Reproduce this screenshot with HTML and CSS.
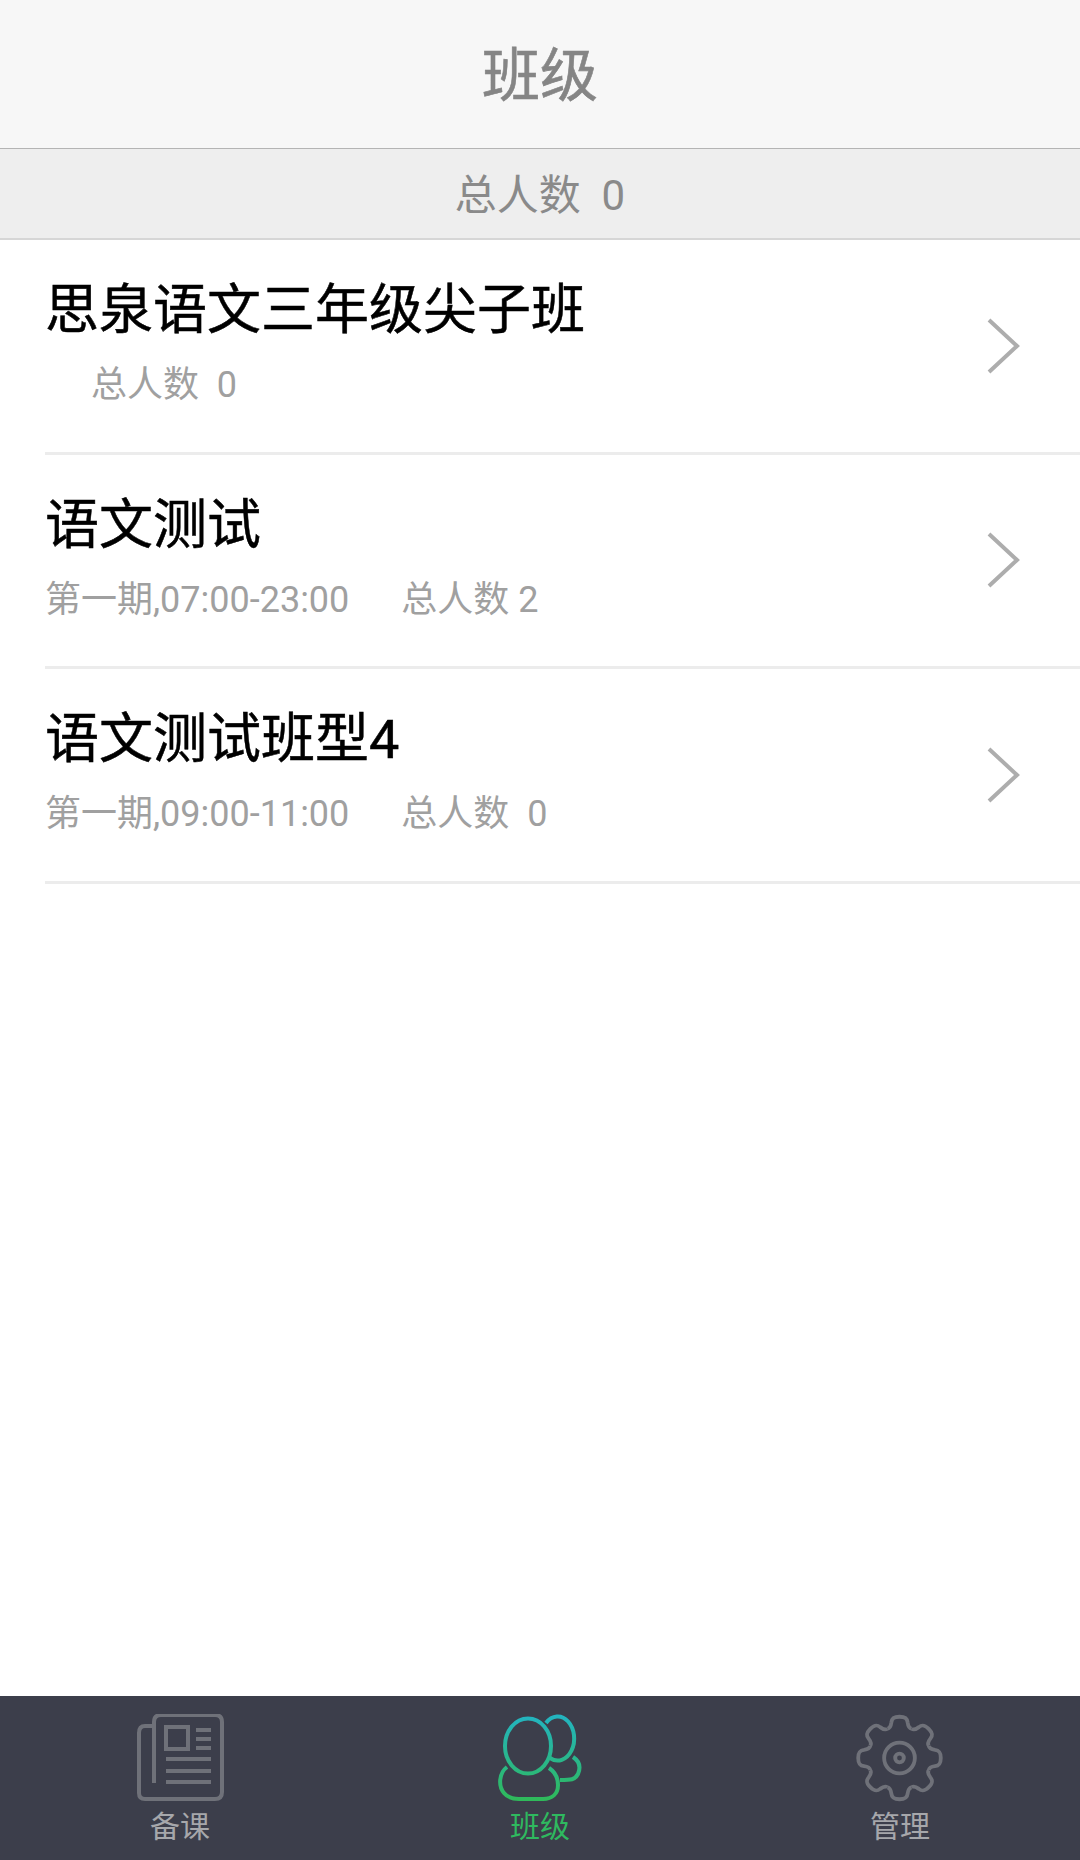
FILE: index.html
```html
<!DOCTYPE html>
<html lang="zh-CN">
<head>
    <meta charset="UTF-8">
    <meta name="viewport" content="width=device-width, initial-scale=1.0">
    <title>班级</title>
    <link rel="stylesheet" href="styles.css">
</head>
<body>
    <div id="app">
        <header class="top-bar">班级</header>
        <div class="total-bar">总人数&nbsp;&nbsp;0</div>

        <ul class="class-list">
            <li class="class-row">
                <div class="class-info">
                    <div class="class-name">思泉语文三年级尖子班</div>
                    <div class="class-meta class-meta-empty"><span>总人数&nbsp;&nbsp;0</span></div>
                </div>
                <svg class="chevron" viewBox="0 0 34 56"><path d="M3 2 L31 28 L3 54"/></svg>
            </li>
            <li class="class-row">
                <div class="class-info">
                    <div class="class-name">语文测试</div>
                    <div class="class-meta"><span class="period">第一期,07:00-23:00</span><span>总人数 2</span></div>
                </div>
                <svg class="chevron" viewBox="0 0 34 56"><path d="M3 2 L31 28 L3 54"/></svg>
            </li>
            <li class="class-row">
                <div class="class-info">
                    <div class="class-name">语文测试班型4</div>
                    <div class="class-meta"><span class="period">第一期,09:00-11:00</span><span>总人数&nbsp;&nbsp;0</span></div>
                </div>
                <svg class="chevron" viewBox="0 0 34 56"><path d="M3 2 L31 28 L3 54"/></svg>
            </li>
        </ul>

        <nav class="tab-bar">
            <div class="tab">
                <svg class="tab-icon" viewBox="0 0 90 90">
                    <g transform="translate(3 1)">
                        <path d="M16 11 H7 Q1 11 1 18 V78 Q1 84 7 84 H77 Q84 84 84 77 V7 Q84 0 77 0 H23 Q16 0 16 7 V68"/>
                        <rect x="28" y="12" width="22" height="22"/>
                        <path d="M58 15 H73 M58 24 H73 M58 33 H73 M28 44 H73 M28 56 H73 M28 67 H73"/>
                    </g>
                </svg>
                <span>备课</span>
            </div>
            <div class="tab tab-active">
                <svg class="tab-icon" viewBox="0 0 90 90">
                    <defs>
                        <linearGradient id="people" gradientUnits="userSpaceOnUse" x1="0" y1="2" x2="0" y2="86">
                            <stop offset="0" stop-color="#23b4c0"/>
                            <stop offset="1" stop-color="#2fb95a"/>
                        </linearGradient>
                    </defs>
                    <g stroke="url(#people)">
                        <ellipse cx="33" cy="32" rx="23" ry="27.5"/>
                        <path d="M51 9 A16.5 22 0 1 1 55 44"/>
                        <path d="M12 53 C4 59 3 72 9 79 C13 84 18 85 24 85 H48 C57 85 63 80 63 71 C63 63 60 58 54 54"/>
                        <path d="M78 43 C84 47 86 53 83 60 C80 66 76 66 65 66"/>
                    </g>
                </svg>
                <span>班级</span>
            </div>
            <div class="tab">
                <svg class="tab-icon" viewBox="0 0 90 90">
                    <defs>
                        <path id="cog" d="M-12.6 -30.5 C-10 -31 -9 -33 -8.5 -37 C-8 -42 -5 -43 0 -43 C5 -43 8 -42 8.5 -37 C9 -33 10 -31 12.6 -30.5"/>
                    </defs>
                    <g transform="translate(44.5 44) scale(.96)">
                        <use href="#cog"/>
                        <use href="#cog" transform="rotate(45)"/>
                        <use href="#cog" transform="rotate(90)"/>
                        <use href="#cog" transform="rotate(135)"/>
                        <use href="#cog" transform="rotate(180)"/>
                        <use href="#cog" transform="rotate(225)"/>
                        <use href="#cog" transform="rotate(270)"/>
                        <use href="#cog" transform="rotate(315)"/>
                        <circle r="16"/>
                        <circle r="4.5"/>
                    </g>
                </svg>
                <span>管理</span>
            </div>
        </nav>
    </div>
</body>
</html>
```

FILE: styles.css
```css
* {
    box-sizing: border-box;
}

body {
    margin: 0;
    background-color: #fff;
    font-family: Roboto, "Noto Sans CJK SC", sans-serif;
}

#app {
    display: flex;
    flex-direction: column;
    width: 1080px;
    height: 1860px;
    overflow: hidden;
}

.top-bar {
    display: flex;
    justify-content: center;
    align-items: center;
    height: 149px;
    padding-top: 3px;
    background-color: #f7f7f7;
    border-bottom: 1px solid #b4b4b4;
    color: #858585;
    font-size: 58px;
    line-height: 1;
    -webkit-text-stroke: 0.6px #858585;
}

.total-bar {
    display: flex;
    justify-content: center;
    align-items: center;
    height: 91px;
    padding-top: 4px;
    background-color: #eeeeee;
    border-bottom: 2px solid #d6d6d6;
    color: #8a8a8a;
    font-size: 42px;
    line-height: 1;
}

.class-list {
    flex: 1;
    margin: 0;
    padding: 0;
    list-style: none;
}

.class-row {
    display: flex;
    justify-content: space-between;
    align-items: center;
    height: 214.5px;
    margin-left: 45px;
    padding-right: 60px;
    border-bottom: 3px solid #ececec;
}

.class-info {
    margin-bottom: 5px;
}

.class-name {
    color: #000;
    font-size: 54px;
    line-height: 70px;
    -webkit-text-stroke: 0.5px #000;
}

.class-meta {
    margin-top: 14px;
    color: #a0a0a0;
    font-size: 36px;
    line-height: 50px;
    white-space: nowrap;
}

.class-meta-empty {
    padding-left: 46px;
}

.period {
    margin-right: 52px;
}

.chevron {
    width: 34px;
    height: 56px;
    fill: none;
    stroke: #adadad;
    stroke-width: 4;
}

.tab-bar {
    display: flex;
    height: 164px;
    background-color: #3c3e4b;
}

.tab {
    flex: 1;
    display: flex;
    flex-direction: column;
    align-items: center;
    padding-top: 18px;
    color: #a6a7ab;
    font-size: 30px;
    line-height: 40px;
}

.tab-active {
    color: #2fb95f;
}

.tab-icon {
    width: 90px;
    height: 90px;
    margin-bottom: 3px;
    fill: none;
    stroke: #6f7179;
    stroke-width: 4;
}
```
